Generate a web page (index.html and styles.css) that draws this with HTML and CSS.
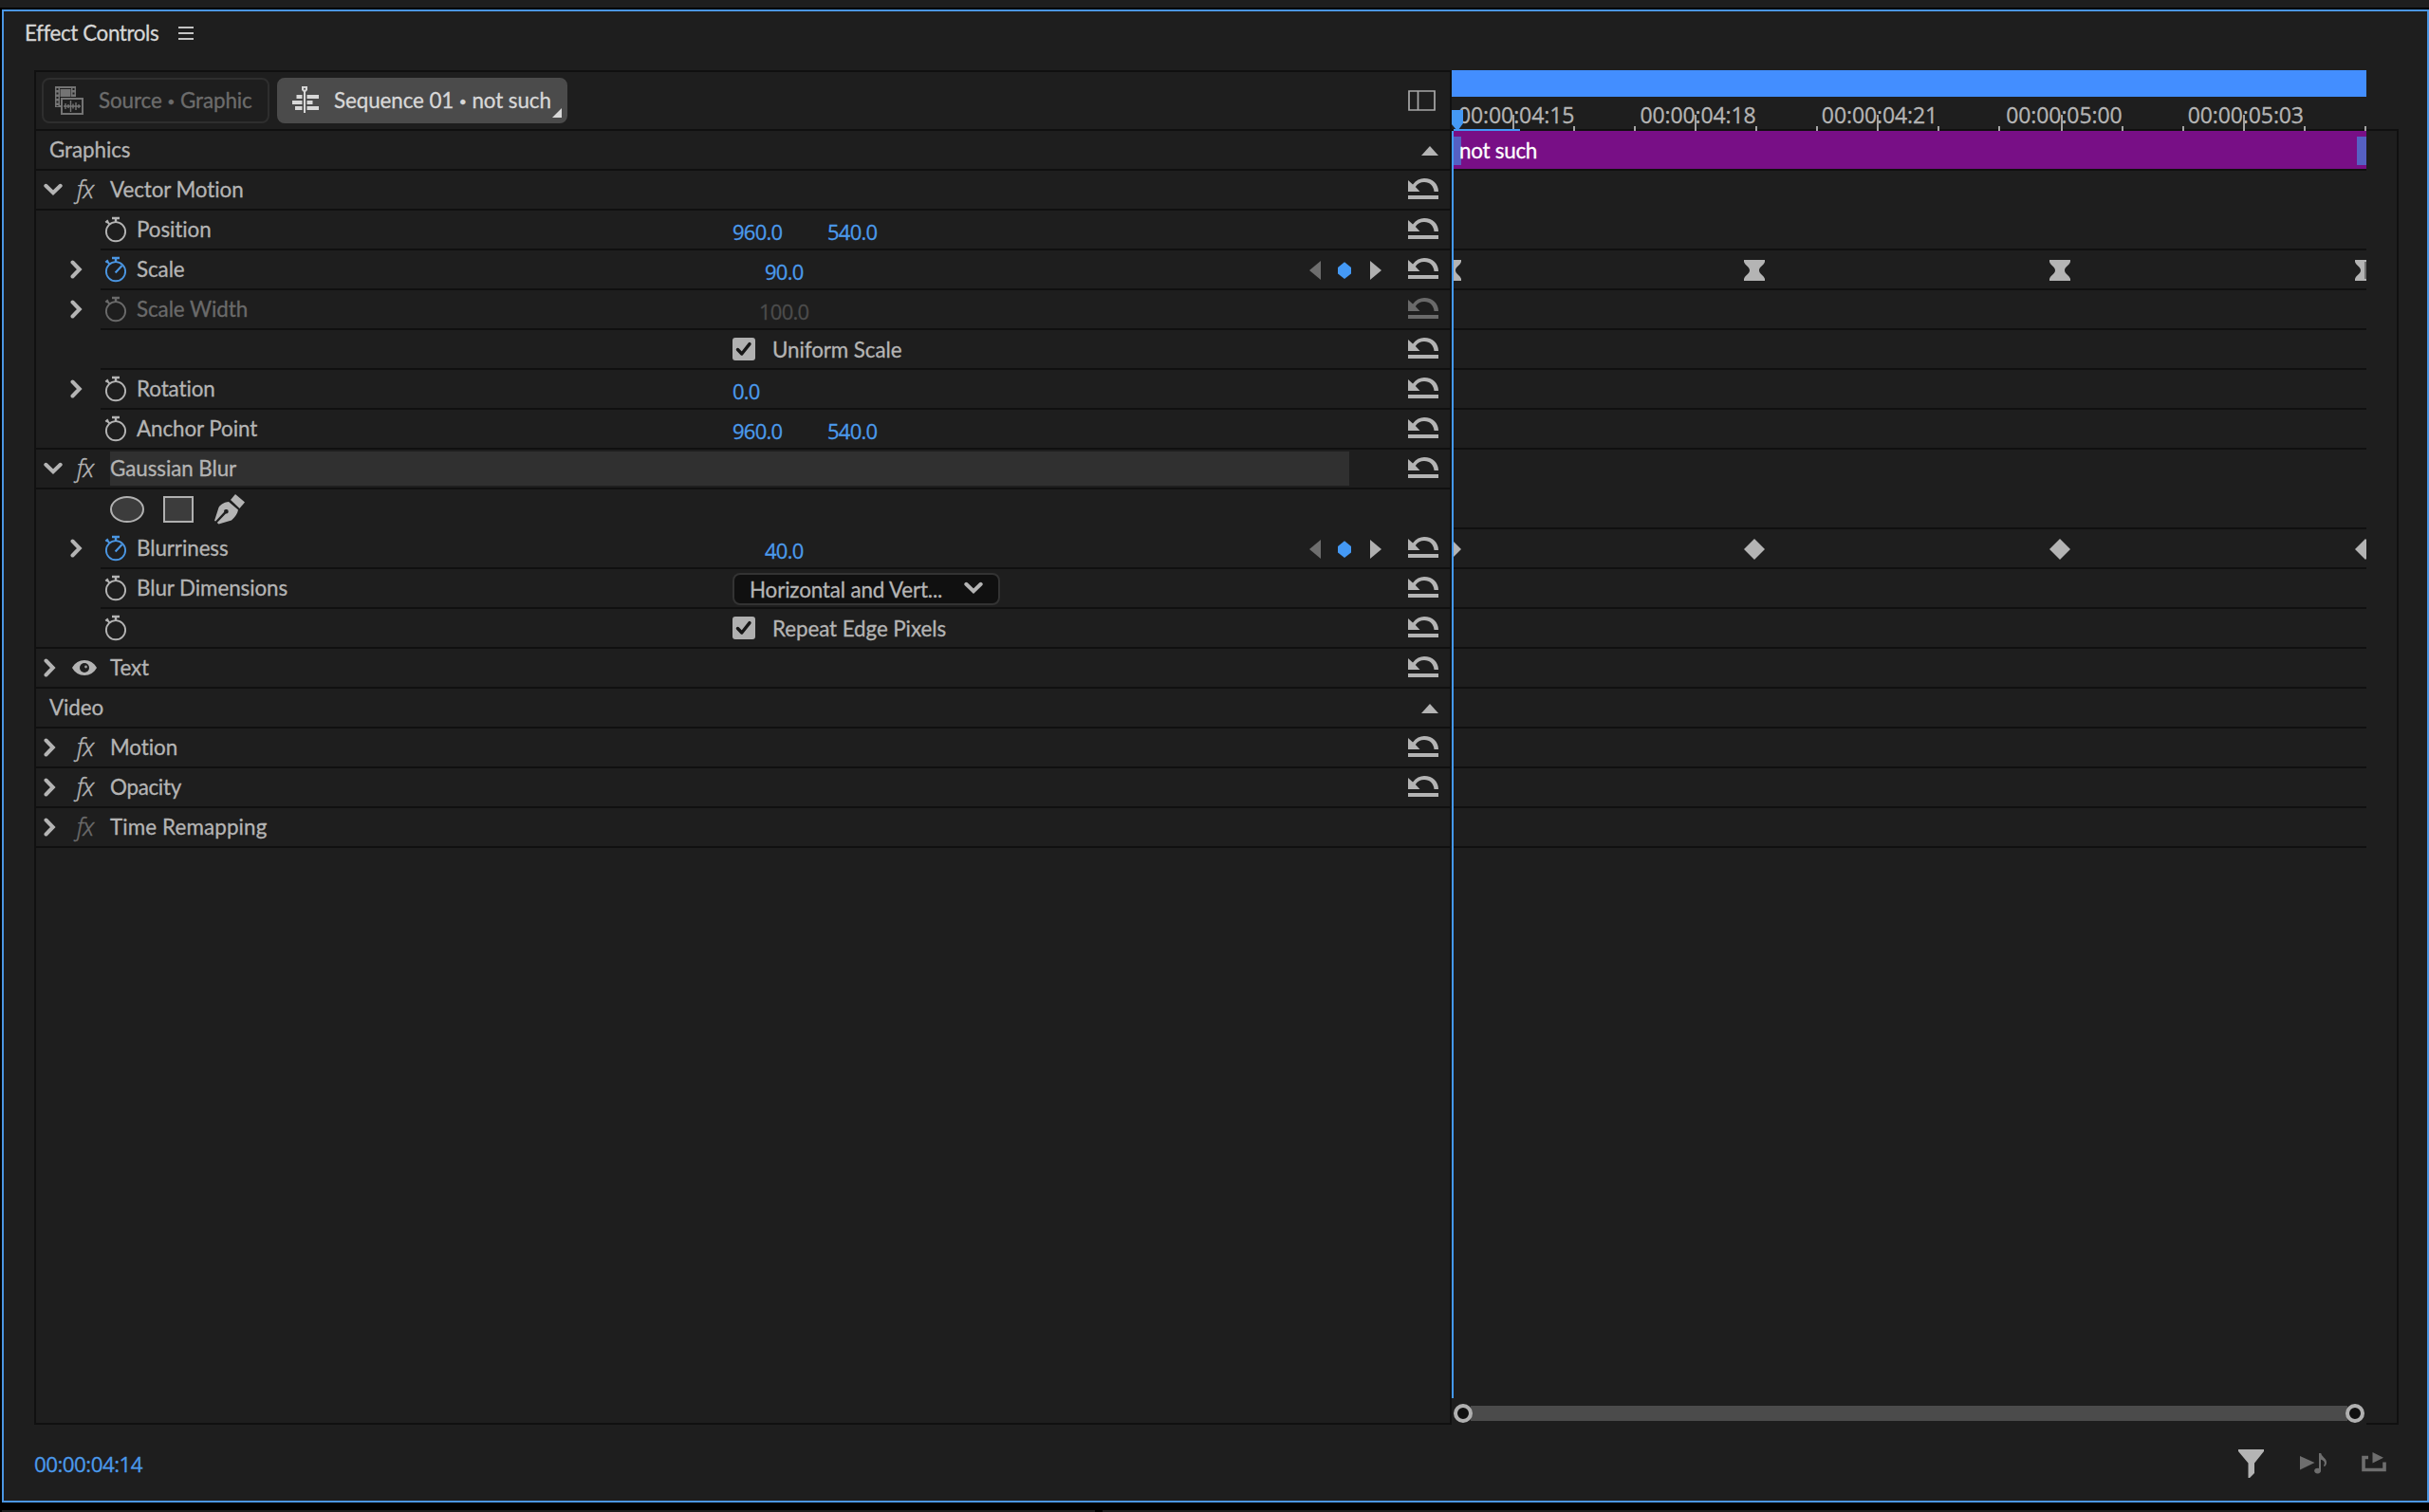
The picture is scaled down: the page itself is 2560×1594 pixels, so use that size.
FILE: index.html
```html
<!DOCTYPE html>
<html lang="en">
<head>
<meta charset="utf-8">
<title>Effect Controls</title>
<link rel="stylesheet" href="styles.css">
</head>
<body>
<svg class="defs" aria-hidden="true">
  <symbol id="i-right" viewBox="0 0 14 20"><path d="M2.5 2.5 9.8 10l-7.3 7.5" fill="none" stroke="currentColor" stroke-width="4" stroke-linecap="round"/></symbol>
  <symbol id="i-down" viewBox="0 0 20 14"><path d="M2.3 2.8 10 10.2l7.7-7.4" fill="none" stroke="currentColor" stroke-width="4" stroke-linecap="round"/></symbol>
  <symbol id="i-watch" viewBox="0 0 24 28"><g fill="none" stroke="currentColor"><circle cx="12" cy="16.2" r="10.1" stroke-width="1.9"/><path d="M8 2h8M12 2v4" stroke-width="2.4"/><path d="M1.4 6.6 4 4.4M2.8 5.4l2.6 3" stroke-width="2.2"/></g></symbol>
  <symbol id="i-watch-on" viewBox="0 0 24 28"><use href="#i-watch"/><path d="M11.6 17.6 18.6 10" fill="none" stroke="currentColor" stroke-width="2.2"/></symbol>
  <symbol id="i-reset" viewBox="0 0 32 22"><path d="M0 2 5 6.500C8.500 2 12.500 0 17 0 26 0 32 6 32 14H27.500C27 8 23 4 17 4 13 4 10 5.800 7.800 9L12.500 14H0Z" fill="currentColor"/><path d="M0 18h32v4H0z" fill="currentColor"/></symbol>
  <symbol id="i-eye" viewBox="0 0 26 16"><path d="M0 8C3 2.800 7.500 0 13 0s10 2.800 13 8c-3 5.200-7.500 8-13 8S3 13.200 0 8Z" fill="currentColor"/><circle cx="13" cy="8" r="5" fill="#1e1e1e"/><circle cx="14.500" cy="7" r="1.400" fill="#a0a0a0"/></symbol>
  <symbol id="i-hour" viewBox="0 0 22 22"><path d="M0 0h22v2c-1 4-6 5-6 9s5 5 6 9v2H0v-2c1-4 6-5 6-9S1 6 0 2Z" fill="currentColor"/></symbol>
  <symbol id="i-diamond" viewBox="0 0 22 22"><path d="M11 0 22 11 11 22 0 11Z" fill="currentColor"/></symbol>
  <symbol id="i-check" viewBox="0 0 24 24"><rect width="24" height="24" rx="3" fill="#b0b0b0"/><path d="M5.500 12.500 9.800 17 18 6.600" fill="none" stroke="#161616" stroke-width="3.400" stroke-linecap="round" stroke-linejoin="round"/></symbol>
  <symbol id="i-nav" viewBox="0 0 76 20"><path d="M12 0v20L0 10Z" fill="#6e6e6e"/><path d="M37 1.300 44 7v6.500L37 19l-7-5.500V7Z" fill="#4499f5"/><path d="M64 0v20l12-10Z" fill="#b0b0b0"/></symbol>
  <symbol id="i-up" viewBox="0 0 18 10"><path d="M9 0l9 10H0Z" fill="currentColor"/></symbol>
</svg>

<div class="strip"></div>
<main class="panel">
  <header class="title">
    <h1>Effect Controls</h1>
    <svg width="16" height="14" viewBox="0 0 16 14"><path d="M0 1h16M0 7h16M0 13h16" stroke="#c4c4c4" stroke-width="2"/></svg>
  </header>

  <div class="frame">
    <section class="props">
      <div class="tabs">
        <div class="tab">
          <svg class="tab-icon" width="30" height="30" viewBox="0 0 30 30">
            <path d="M0 0h22v11H17V2H5v18h1v2H0Z" fill="#747474"/><path d="M5.500 3h11v8h-11z" fill="#747474"/>
            <path d="M2.500 2v19M19.500 2v9" stroke="#1e1e1e" stroke-width="2" stroke-dasharray="2 2.500"/>
            <rect x="7" y="13" width="22" height="16" fill="#1e1e1e" stroke="#747474" stroke-width="2"/>
            <path d="M9 21h18M11 18v6M14 19v4M16.500 15v12M19 18.500v5M22 17v8M25 19v4" stroke="#747474" stroke-width="1.400"/>
          </svg>
          <span class="label">Source <span class="dot">•</span> Graphic</span>
        </div>
        <div class="tab active">
          <svg class="tab-icon" width="30" height="30" viewBox="0 0 30 30"><g fill="#d8d8d8"><path d="M10 0h6v4l-2 2h-2l-2-2Z"/><path d="M12 5h2v23h-2z"/><path d="M4.500 9h6v4h-6zM15.500 9H28v4H15.500zM0 15h10.500v4H0zM15.500 15h6v4h-6zM3 21h7.500v4H3zM15.500 21H28v4H15.500z"/></g><circle cx="13" cy="2.800" r="1" fill="#4b4b4b"/></svg>
          <span class="label">Sequence 01 <span class="dot">•</span> not such</span>
          <svg class="corner" width="10" height="10" viewBox="0 0 10 10"><path d="M10 0v10H0Z" fill="#d8d8d8"/></svg>
        </div>
        <svg class="toggle" width="29" height="22" viewBox="0 0 29 22"><path d="M1 1h27v20H1zM10.500 1v20" fill="none" stroke="#a8a8a8" stroke-width="1.700"/></svg>
      </div>

      <div class="row section"><span class="label">Graphics</span><svg class="up"><use href="#i-up"/></svg></div>

      <div class="row full"><div class="gutter"><svg class="down"><use href="#i-down"/></svg><i class="fx">fx</i></div><div class="main"><span class="name">Vector Motion</span><svg class="reset"><use href="#i-reset"/></svg></div></div>
      <div class="row"><div class="gutter"></div><div class="main"><div class="prop"><svg class="watch"><use href="#i-watch"/></svg><span>Position</span></div><div class="value"><b>960.0</b><b>540.0</b></div><svg class="reset"><use href="#i-reset"/></svg></div></div>
      <div class="row"><div class="gutter child"><svg class="right"><use href="#i-right"/></svg></div><div class="main"><div class="prop"><svg class="watch on"><use href="#i-watch-on"/></svg><span>Scale</span></div><div class="value slider"><b>90.0</b></div><svg class="nav"><use href="#i-nav"/></svg><svg class="reset"><use href="#i-reset"/></svg></div></div>
      <div class="row disabled"><div class="gutter child"><svg class="right"><use href="#i-right"/></svg></div><div class="main"><div class="prop"><svg class="watch"><use href="#i-watch"/></svg><span>Scale Width</span></div><div class="value slider wide"><b>100.0</b></div><svg class="reset"><use href="#i-reset"/></svg></div></div>
      <div class="row"><div class="gutter"></div><div class="main"><div class="prop"></div><div class="value"><svg class="check"><use href="#i-check"/></svg><span>Uniform Scale</span></div><svg class="reset"><use href="#i-reset"/></svg></div></div>
      <div class="row"><div class="gutter child"><svg class="right"><use href="#i-right"/></svg></div><div class="main"><div class="prop"><svg class="watch"><use href="#i-watch"/></svg><span>Rotation</span></div><div class="value"><b>0.0</b></div><svg class="reset"><use href="#i-reset"/></svg></div></div>
      <div class="row full"><div class="gutter"></div><div class="main"><div class="prop"><svg class="watch"><use href="#i-watch"/></svg><span>Anchor Point</span></div><div class="value"><b>960.0</b><b>540.0</b></div><svg class="reset"><use href="#i-reset"/></svg></div></div>

      <div class="row full"><div class="gutter"><svg class="down"><use href="#i-down"/></svg><i class="fx">fx</i></div><div class="main"><span class="name selected">Gaussian Blur</span><svg class="reset"><use href="#i-reset"/></svg></div></div>
      <div class="row open"><div class="gutter"></div><div class="main"><div class="masks">
        <svg width="36" height="28" viewBox="0 0 36 28"><ellipse cx="18" cy="14" rx="17" ry="13" fill="#3c3c3c" stroke="#b0b0b0" stroke-width="2"/></svg>
        <svg width="32" height="28" viewBox="0 0 32 28"><rect x="1" y="1" width="30" height="26" fill="#3c3c3c" stroke="#b0b0b0" stroke-width="2"/></svg>
        <svg width="32" height="32" viewBox="0 0 32 32"><g fill="#b4b4b4"><path d="M22 0 32 8.500 26.500 15 17 6Z"/><path d="M15 8 25 16.500C24.500 20 22 24 18 27.500L4.500 31.500 2.800 30 12 20.500A2.300 2.300 0 1 0 10.200 18.800L1.200 28.500 0 28 4.500 14C7 10 11 8.500 15 8Z"/></g></svg>
      </div></div></div>
      <div class="row"><div class="gutter child"><svg class="right"><use href="#i-right"/></svg></div><div class="main"><div class="prop"><svg class="watch on"><use href="#i-watch-on"/></svg><span>Blurriness</span></div><div class="value slider"><b>40.0</b></div><svg class="nav"><use href="#i-nav"/></svg><svg class="reset"><use href="#i-reset"/></svg></div></div>
      <div class="row"><div class="gutter"></div><div class="main"><div class="prop"><svg class="watch"><use href="#i-watch"/></svg><span>Blur Dimensions</span></div><div class="value"><div class="select"><span>Horizontal and Vert...</span><svg class="down"><use href="#i-down"/></svg></div></div><svg class="reset"><use href="#i-reset"/></svg></div></div>
      <div class="row full"><div class="gutter"></div><div class="main"><div class="prop"><svg class="watch"><use href="#i-watch"/></svg></div><div class="value"><svg class="check"><use href="#i-check"/></svg><span>Repeat Edge Pixels</span></div><svg class="reset"><use href="#i-reset"/></svg></div></div>

      <div class="row full"><div class="gutter"><svg class="right"><use href="#i-right"/></svg><svg class="eye"><use href="#i-eye"/></svg></div><div class="main"><span class="name">Text</span><svg class="reset"><use href="#i-reset"/></svg></div></div>
      <div class="row section"><span class="label">Video</span><svg class="up"><use href="#i-up"/></svg></div>
      <div class="row full"><div class="gutter"><svg class="right"><use href="#i-right"/></svg><i class="fx">fx</i></div><div class="main"><span class="name">Motion</span><svg class="reset"><use href="#i-reset"/></svg></div></div>
      <div class="row full"><div class="gutter"><svg class="right"><use href="#i-right"/></svg><i class="fx">fx</i></div><div class="main"><span class="name tight">Opacity</span><svg class="reset"><use href="#i-reset"/></svg></div></div>
      <div class="row full"><div class="gutter"><svg class="right"><use href="#i-right"/></svg><i class="fx off">fx</i></div><div class="main"><span class="name loose">Time Remapping</span></div></div>
    </section>

    <section class="timeline">
      <div class="range"></div>
      <div class="ruler">
        <div class="times"><span>00:00:04:15</span><span>00:00:04:18</span><span>00:00:04:21</span><span>00:00:05:00</span><span>00:00:05:03</span></div>
        <svg class="ticks" width="964" height="36" viewBox="0 0 964 36"><path d="M65 19v17M257 19v17M449 19v17M643 19v17M835 19v17M129 31v5M193 31v5M321 31v5M385 31v5M513 31v5M577 31v5M707 31v5M771 31v5M899 31v5M963 31v5" stroke="#a4a4a4" stroke-width="2"/><path d="M2 35h70" stroke="#4499f5" stroke-width="2"/><path d="M0 14h12v14l-5 7H5L0 29Z" fill="#4499f5"/></svg>
      </div>
      <div class="clip"><span>not such</span></div>
      <div class="lane blank"></div>
      <div class="lane"></div>
      <div class="lane keys"><svg class="key k1"><use href="#i-hour"/></svg><svg class="key k2"><use href="#i-hour"/></svg><svg class="key k3"><use href="#i-hour"/></svg><svg class="key k4"><use href="#i-hour"/></svg><span class="end"></span></div>
      <div class="lane"></div>
      <div class="lane"></div>
      <div class="lane"></div>
      <div class="lane"></div>
      <div class="lane blank"></div>
      <div class="lane"></div>
      <div class="lane keys"><svg class="key k1"><use href="#i-diamond"/></svg><svg class="key k2"><use href="#i-diamond"/></svg><svg class="key k3"><use href="#i-diamond"/></svg><svg class="key k4"><use href="#i-diamond"/></svg></div>
      <div class="lane"></div>
      <div class="lane"></div>
      <div class="lane"></div>
      <div class="lane"></div>
      <div class="lane"></div>
      <div class="lane"></div>
      <div class="lane"></div>
      <div class="scroll"><span class="knob"></span><span class="bar"></span><span class="knob"></span></div>
      <div class="playhead"></div>
    </section>
    <div class="edge"></div>
  </div>

  <footer class="foot">
    <span class="timecode">00:00:04:14</span>
    <svg width="28" height="30" viewBox="0 0 28 30"><path d="M0 0h27v2L17 14.500V25L12 30h-1.500V14.500L0 2Z" fill="#b4b4b4"/></svg>
    <svg class="play" width="29" height="22" viewBox="0 0 29 22"><g fill="#6e6e6e"><path d="M0 3v14.500L15.500 10Z"/><ellipse cx="18.600" cy="18.600" rx="3.400" ry="2.800"/><path d="M20 0h2.200c.5 4 6 5 5.800 10-.1 1.800-.8 3-2 4l-1.200-.8c2.500-3 .5-5.800-2.800-6.500V18.600H20Z"/></g></svg>
    <svg class="export" width="26" height="21" viewBox="0 0 26 21"><path d="M7 5.500H2v13h22v-8" fill="none" stroke="#6e6e6e" stroke-width="3.600"/><path d="M11.500 0 23 5.800 11.500 11.500Z" fill="#6e6e6e"/></svg>
  </footer>
</main>
<div class="dock"><span></span><span></span></div>
</body>
</html>
```
FILE: styles.css
```css
* { box-sizing: border-box; }

html, body { height: 100%; }

body {
  margin: 0;
  display: flex;
  flex-direction: column;
  background: #000;
  color: #b4b4b4;
  font: 22.4px/26px Lato, "Open Sans", sans-serif;
  letter-spacing: -.08px;
  -webkit-text-stroke: .3px;
  overflow: hidden;
  white-space: nowrap;
}

svg { display: block; flex: none; }
.defs { position: absolute; width: 0; height: 0; }

.strip { height: 8px; margin-bottom: 2px; background: #1e1e1e; }

.panel {
  height: 1574px;
  margin-left: 2px;
  border: 2px solid #4b96e2;
  background: #1e1e1e;
  display: flex;
  flex-direction: column;
}

.dock { display: flex; gap: 8px; height: 2px; margin: 8px 0 0 2px; }
.dock span { background: #1e1e1e; width: 1152px; }
.dock span + span { flex: 1; width: auto; }

.title { display: flex; align-items: center; gap: 21px; height: 46px; padding-left: 22px; margin-bottom: 16px; }
.title h1 { margin: 0; font-size: 22.4px; font-weight: 400; letter-spacing: -.4px; color: #d6d6d6; padding-bottom: 1px; }

.frame { display: flex; height: 1428px; padding-left: 32px; }

/* property list */
.props { width: 1494px; border: 2px solid #101010; }

.tabs { display: flex; align-items: center; gap: 8px; height: 62px; padding-left: 6px; border-bottom: 2px solid #101010; }
.tab { display: flex; align-items: center; width: 240px; height: 48px; padding-left: 12px; border: 2px solid #2e2e2e; border-radius: 8px; color: #6c6c6c; letter-spacing: -.1px; }
.tab .label { padding-bottom: 1px; margin-left: 16px; }
.tab.active { position: relative; width: 306px; padding-left: 14px; background: #4b4b4b; border-color: #4b4b4b; color: #d8d8d8; }
.tab.active .label { margin-left: 14px; }
.dot { font-size: 14px; vertical-align: 2px; line-height: 1; }
.corner { position: absolute; right: 4px; bottom: 4px; }
.toggle { margin: 0 15px 0 auto; }

.row { display: flex; height: 42px; }
.gutter { display: flex; align-items: center; width: 68px; padding-left: 8px; border-bottom: 2px solid transparent; }
.gutter.child { padding-left: 36px; }
.main { flex: 1; display: flex; align-items: center; border-bottom: 2px solid #101010; }
.row.full { border-bottom: 2px solid #101010; }
.row.full .main, .row.full .gutter { border-bottom: 0; }
.row.open .main { border-bottom-color: transparent; }

.section { align-items: center; justify-content: space-between; padding: 0 12px 0 14px; border-bottom: 2px solid #101010; }
.section .label { padding-bottom: 1px; }
.up { width: 18px; height: 10px; margin-top: 2px; }

.right { width: 14px; height: 20px; }
.down { width: 20px; height: 14px; }
.fx { width: 24px; margin-left: 15px; font: italic 300 25px/30px "Open Sans", sans-serif; -webkit-text-stroke: .5px; letter-spacing: -.5px; padding-bottom: 3px; }
.right + .fx { margin-left: 21px; }
.fx.off { color: #6c6c6c; }
.eye { width: 26px; height: 16px; margin-left: 16px; }

.name { flex: 1; height: 36px; margin: 0 62px 0 10px; line-height: 35px; }
.name.loose { letter-spacing: .12px; }
.name.tight { letter-spacing: -.3px; }
.selected { background: #303030; }

.prop { display: flex; align-items: center; gap: 10px; width: 666px; padding-left: 4px; }
.prop span { padding-bottom: 1px; }
.watch { width: 24px; height: 28px; }
.watch.on { color: #4b96e2; }

.value { flex: 1; display: flex; align-items: center; }
.value span { margin-left: 18px; padding-top: 1px; }
.value b { width: 100px; padding-top: 3px; font: 400 22px/26px "Open Sans", sans-serif; letter-spacing: -.75px; color: #4b9aec; }
.slider { padding-left: 34px; }
.slider.wide { padding-left: 28px; }
.disabled .main { color: #6a6a6a; }
.disabled .value b { color: #4c4c4c; }
.check { width: 24px; height: 24px; }
.nav { width: 76px; height: 20px; margin-right: 28px; margin-top: 2px; }
.reset { width: 32px; height: 22px; margin-right: 12px; margin-top: -2px; }

.select { display: flex; align-items: center; justify-content: space-between; width: 282px; height: 34px; padding-right: 16px; margin-top: 1px; border: 2px solid #333; border-radius: 8px; background: #101010; }
.select span { margin-left: 16px; padding-top: 2px; letter-spacing: -.15px; }
.select .down { margin-top: -1px; }

.masks { display: flex; align-items: center; gap: 20px; padding: 2px 0 0 10px; }
.masks svg:last-child { margin-left: 2px; }

/* timeline */
.timeline { position: relative; width: 964px; display: flex; flex-direction: column; overflow: hidden; }
.range { height: 28px; background: #438eff; }
.ruler { position: relative; height: 36px; border-bottom: 2px solid #101010; }
.ticks { position: absolute; left: 0; top: 0; }
.times { display: flex; gap: 69.200px; padding: 2px 0 0 7px; font: 23px/34px "Open Sans", sans-serif; letter-spacing: -.1px; }
.times span:nth-child(4) { margin-left: 3px; }
.clip { height: 42px; border-bottom: 2px solid #101010; display: flex; align-items: center; color: #fff; padding-left: 8px; background:
  linear-gradient(#5560c3, #5560c3) 2px 6px / 8px 30px no-repeat,
  linear-gradient(#5560c3, #5560c3) 954px 6px / 10px 30px no-repeat, #780f86; }
.clip span { padding-top: 2px; letter-spacing: -.25px; }
.lane { height: 42px; border-bottom: 2px solid #101010; }
.lane.blank { border-color: transparent; }
.keys { position: relative; }
.key { position: absolute; top: 10px; width: 22px; height: 22px; }
.k1 { left: -12px; }
.k2 { left: 308px; }
.k3 { left: 630px; }
.k4 { left: 952px; }
.end { position: absolute; right: 0; top: 12px; width: 2px; height: 18px; background: #6e6e6e; }
.playhead { position: absolute; left: 0; top: 64px; width: 2px; height: 1336px; background: #4499f5; }
.scroll { display: flex; align-items: center; height: 20px; margin: auto 2px 2px; }
.knob { position: relative; width: 20px; height: 20px; border: 4px solid #b0b0b0; border-radius: 50%; background: #101010; }
.bar { flex: 1; height: 16px; margin: 0 -2px; background: #4b4b4b; }
.edge { width: 34px; margin-top: 62px; border: 2px solid #101010; border-left: 0; }

/* footer */
.foot { flex: 1; display: flex; align-items: flex-start; padding: 26px 43px 0 32px; }
.timecode { margin-right: auto; padding-top: 3px; font: 22.400px/26px "Open Sans", sans-serif; letter-spacing: -.55px; color: #4b9aec; }
.play { margin: 4px 0 0 37px; }
.export { margin: 3px 0 0 36px; }
```
